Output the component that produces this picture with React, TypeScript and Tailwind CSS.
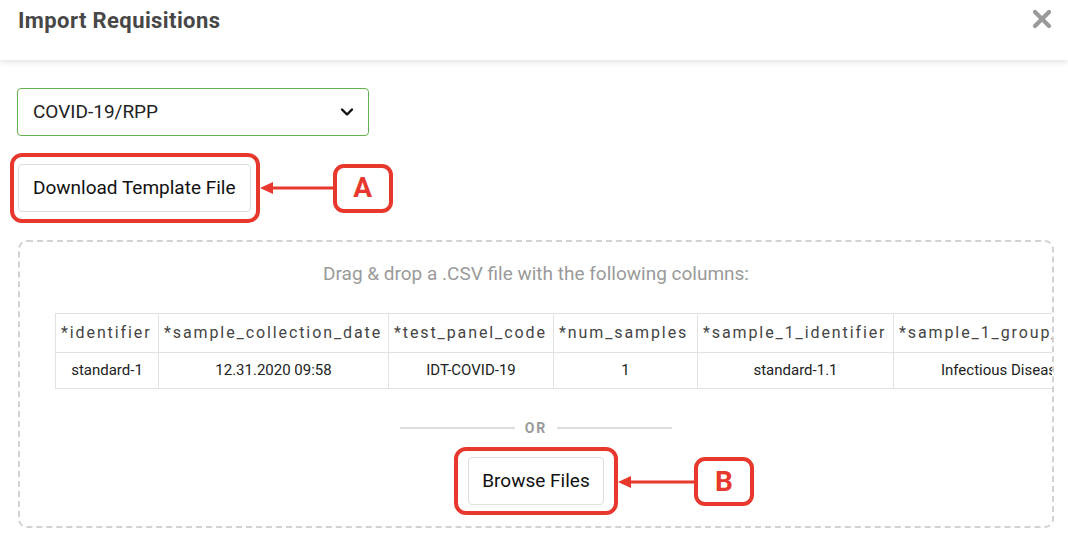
import React from 'react';

const columns = [
  { name: '*identifier', sample: 'standard-1', width: 103 },
  { name: '*sample_collection_date', sample: '12.31.2020 09:58', width: 230 },
  { name: '*test_panel_code', sample: 'IDT-COVID-19', width: 165 },
  { name: '*num_samples', sample: '1', width: 144 },
  { name: '*sample_1_identifier', sample: 'standard-1.1', width: 196 },
  { name: '*sample_1_group_name', sample: 'Infectious Disease', width: 218 },
];

function LeftArrow({ width }: { width: number }) {
  return (
    <svg width={width} height="16" viewBox={`0 0 ${width} 16`} className="shrink-0">
      <line x1="10" y1="8" x2={width} y2="8" stroke="#e8372c" strokeWidth="3" />
      <polygon points="0,8 13,2 13,14" fill="#e8372c" />
    </svg>
  );
}

function Badge({ letter }: { letter: string }) {
  return (
    <div className="w-[60px] h-[49px] shrink-0 rounded-[11px] border-[4px] border-[#e8372c] flex items-center justify-center text-[28px] font-bold text-[#e8372c] leading-none">
      {letter}
    </div>
  );
}

export default function App() {
  return (
    <div className="w-[1068px] h-[542px] bg-white overflow-hidden font-['Roboto',sans-serif] text-[#222]">
      <div className="relative z-10 h-[60px] bg-white shadow-[0_2px_6px_rgba(0,0,0,0.12)] flex justify-between items-start pl-[18px] pr-[16px] pt-[6px]">
        <h1 className="text-[22px] font-bold text-[#474747] leading-[30px] tracking-[0.4px]">Import Requisitions</h1>
        <svg width="20" height="20" viewBox="0 0 20 20" className="mt-[3px]">
          <line x1="3" y1="3" x2="17" y2="17" stroke="#9a9a9a" strokeWidth="4.2" strokeLinecap="round" />
          <line x1="17" y1="3" x2="3" y2="17" stroke="#9a9a9a" strokeWidth="4.2" strokeLinecap="round" />
        </svg>
      </div>

      <div className="pl-[17px] pr-[14px] pt-[28px]">
        <div className="w-[352px] h-[48px] rounded-[4px] border border-[#62b24f] flex items-center justify-between pl-[15px] pr-[14px]">
          <span className="text-[19px]">COVID-19/RPP</span>
          <svg width="14" height="10" viewBox="0 0 14 10">
            <polyline points="2,2.5 7,7.5 12,2.5" fill="none" stroke="#111" strokeWidth="2.4" strokeLinecap="round" strokeLinejoin="round" />
          </svg>
        </div>

        <div className="mt-[17px] -ml-[7px] flex items-center">
          <div className="rounded-[12px] border-[4px] border-[#e8372c] pl-[4px] pr-[5px] py-[7px]">
            <button className="h-[48px] px-[14px] rounded-[4px] border border-[#dedede] bg-white text-[19px] text-[#111]">
              Download Template File
            </button>
          </div>
          <LeftArrow width={73} />
          <Badge letter="A" />
        </div>

        <div className="mt-[17px] ml-[1px] w-[1036px] h-[288px] rounded-[9px] border-2 border-dashed border-[#d2d2d2] flex flex-col items-stretch">
          <p className="mt-[20px] text-center text-[19px] text-[#9a9a9a] leading-[24px]">
            Drag &amp; drop a .CSV file with the following columns:
          </p>

          <div className="mt-[27px] ml-[35px] overflow-hidden">
            <table className="table-fixed border-collapse" style={{ width: columns.reduce((s, c) => s + c.width, 0) }}>
              <colgroup>
                {columns.map((c) => (
                  <col key={c.name} style={{ width: c.width }} />
                ))}
              </colgroup>
              <thead>
                <tr className="h-[39px]">
                  {columns.map((c) => (
                    <th key={c.name} className="border border-[#e2e2e2] px-[5px] text-left font-normal text-[16px] tracking-[1.9px] text-[#444] whitespace-nowrap overflow-hidden">
                      {c.name}
                    </th>
                  ))}
                </tr>
              </thead>
              <tbody>
                <tr className="h-[36px]">
                  {columns.map((c) => (
                    <td key={c.name} className="border border-[#e2e2e2] px-[5px] text-center text-[15px] text-[#222] whitespace-nowrap">
                      {c.sample}
                    </td>
                  ))}
                </tr>
              </tbody>
            </table>
          </div>

          <div className="mt-[32px] flex items-center justify-center gap-[10px]">
            <div className="w-[115px] h-[2px] bg-[#dcdcdc]" />
            <span className="text-[14px] font-bold tracking-[2px] text-[#9a9a9a] leading-none">OR</span>
            <div className="w-[115px] h-[2px] bg-[#dcdcdc]" />
          </div>

          <div className="mt-[12px] flex justify-center">
            <div className="relative">
              <div className="rounded-[12px] border-[4px] border-[#e8372c] px-[10px] py-[6px]">
                <button className="h-[48px] w-[136px] rounded-[4px] border border-[#dedede] bg-white text-[19px] text-[#111]">
                  Browse Files
                </button>
              </div>
              <div className="absolute left-full top-[10px] flex items-center">
                <LeftArrow width={76} />
                <Badge letter="B" />
              </div>
            </div>
          </div>
        </div>
      </div>
    </div>
  );
}
